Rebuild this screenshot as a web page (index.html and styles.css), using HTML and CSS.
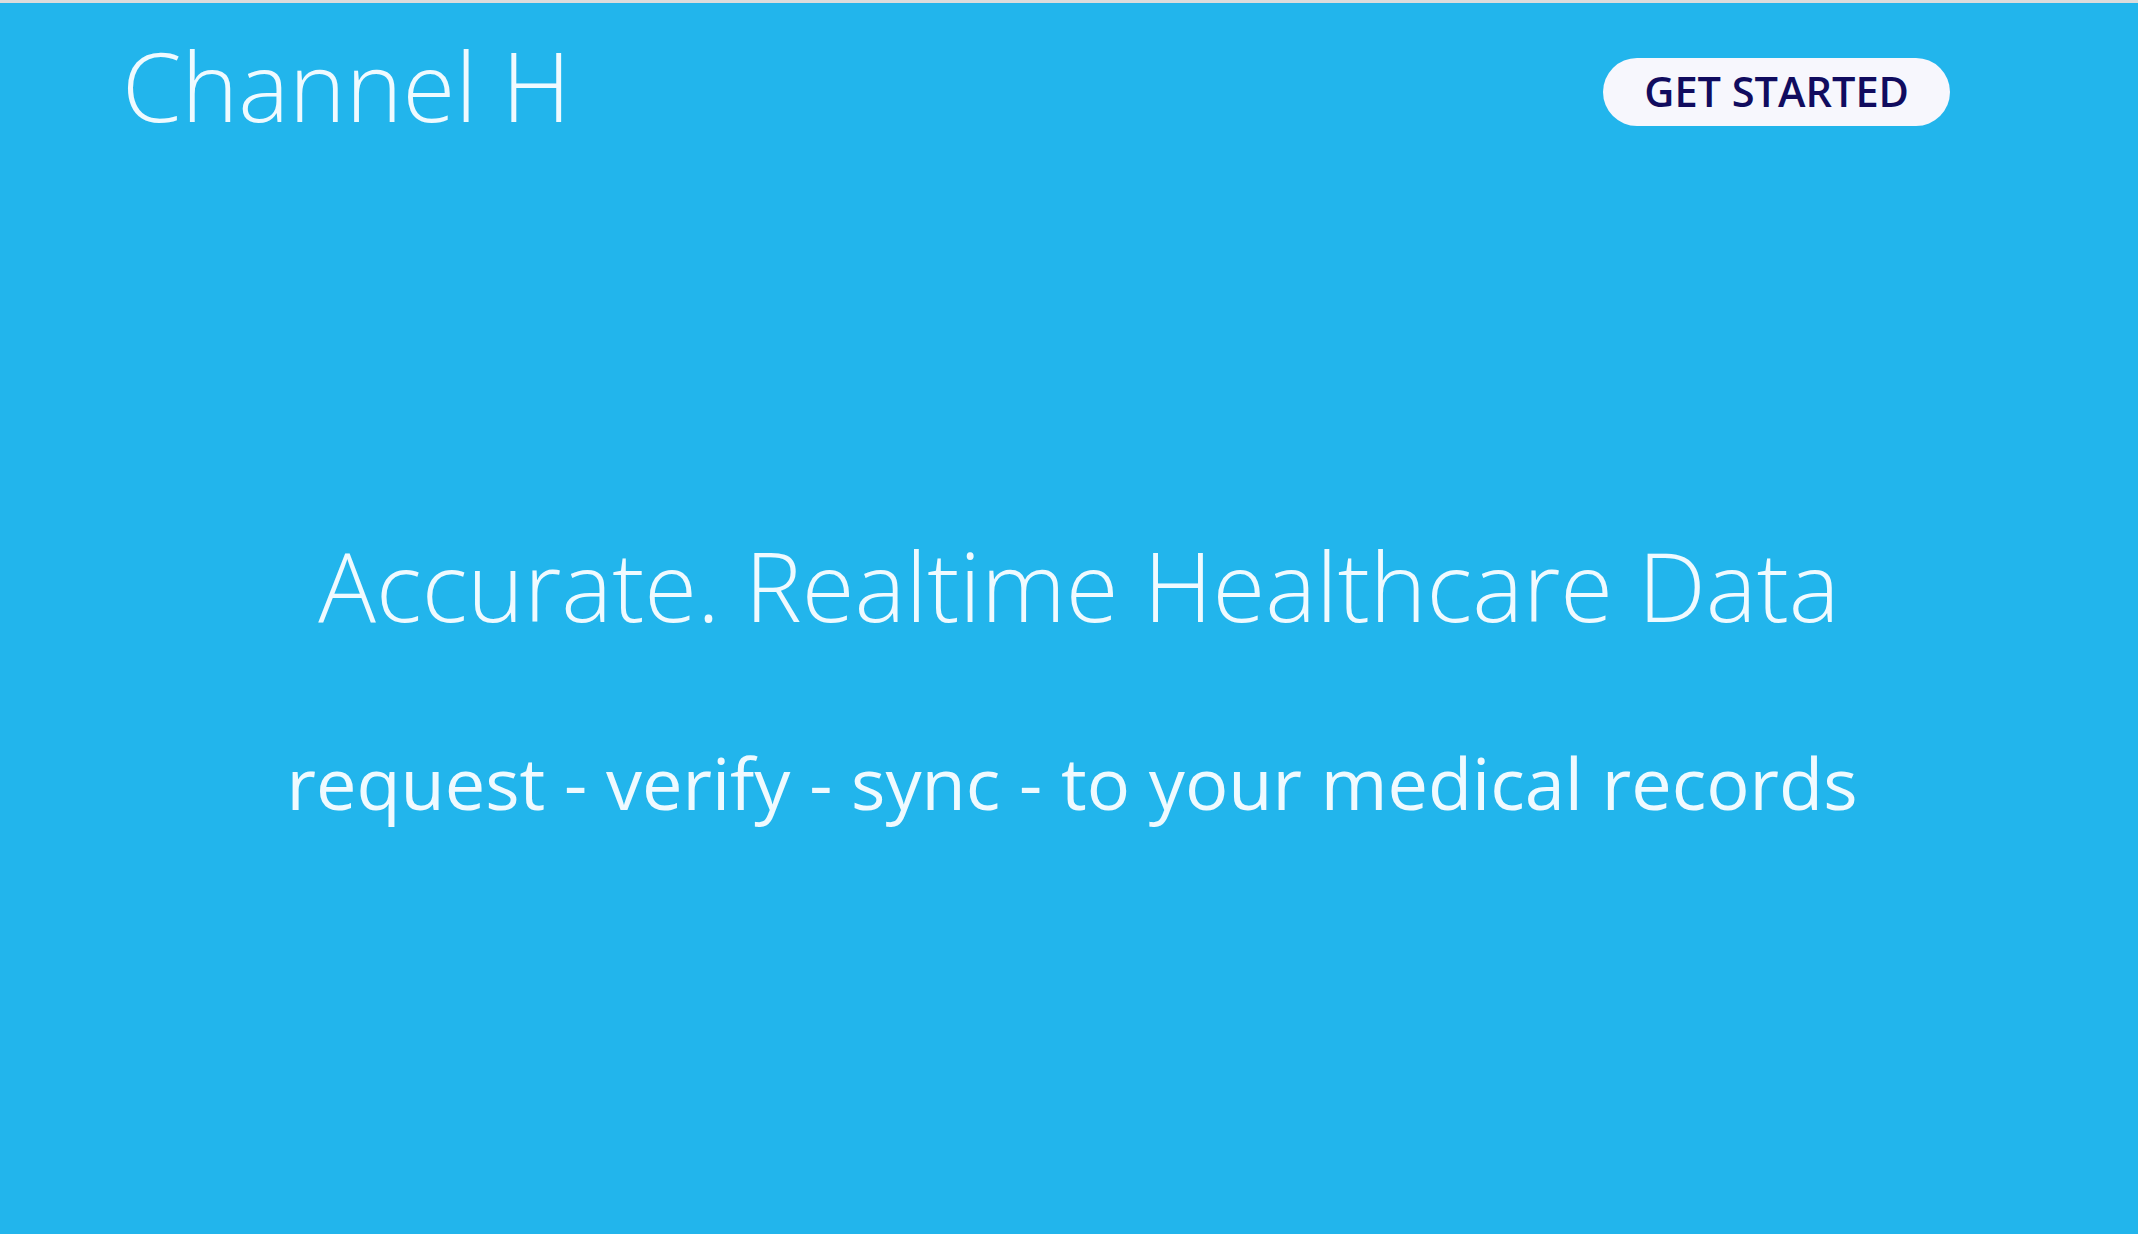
FILE: index.html
```html
<!DOCTYPE html>
<html lang="en">
<head>
<meta charset="utf-8">
<title>Channel H</title>
<link rel="stylesheet" href="styles.css">
</head>
<body>
<div class="page">
  <header class="topbar">
    <div class="brand">Channel H</div>
    <a class="cta" href="#">GET STARTED</a>
  </header>
  <main class="hero">
    <h1 class="headline">Accurate. Realtime Healthcare Data</h1>
    <p class="tagline">request - verify - sync - to your medical records</p>
  </main>
</div>
</body>
</html>
```
FILE: styles.css
```css
html, body {
  margin: 0;
  padding: 0;
  height: 100%;
}
body {
  background: #22b5ec;
  font-family: "Open Sans", "Noto Sans", sans-serif;
  color: #effaff;
}
.page {
  min-height: 100%;
  box-sizing: border-box;
  border-top: 3px solid #dcdcdc;
  background: #22b5ec;
}
.topbar {
  display: flex;
  justify-content: space-between;
  align-items: flex-start;
  padding: 16px 188px 0 122px;
}
.brand {
  font-size: 96px;
  font-weight: 300;
  line-height: normal;
  color: #effaff;
}
.cta {
  margin-top: 39px;
  height: 68px;
  box-sizing: border-box;
  display: inline-flex;
  align-items: center;
  padding: 0 41px 3px;
  border-radius: 34px;
  background: #f7f7fd;
  color: #110c5f;
  font-size: 41.5px;
  font-weight: 600;
  text-decoration: none;
  line-height: normal;
}
.hero {
  text-align: center;
}
.headline {
  margin: 369px 0 0;
  padding-left: 20px;
  font-size: 96px;
  font-weight: 300;
  line-height: normal;
  color: #effaff;
}
.tagline {
  margin: 83px 0 0;
  padding-left: 6px;
  font-size: 72.1px;
  font-weight: 400;
  line-height: normal;
  color: #effaff;
}
```
